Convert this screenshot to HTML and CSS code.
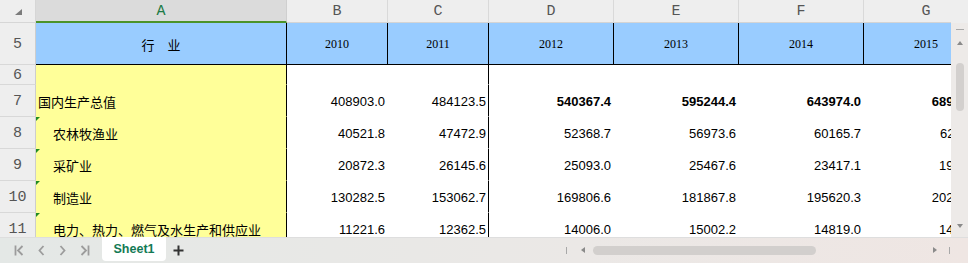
FILE: index.html
```html
<!DOCTYPE html>
<html>
<head>
<meta charset="UTF-8">
<link rel="stylesheet" href="styles.css">
<title>Sheet1</title>
</head>
<body>
  <div class="workbook">
    <div class="sheet-area">
      <div class="grid">
        <!-- column headers -->
        <div class="corner"><span class="corner-mark"></span></div>
        <div class="col-head selected">A</div>
        <div class="col-head">B</div>
        <div class="col-head">C</div>
        <div class="col-head">D</div>
        <div class="col-head">E</div>
        <div class="col-head">F</div>
        <div class="col-head">G</div>

        <!-- row 5 -->
        <div class="row-head">5</div>
        <div class="cell title-cell label-head">行　业</div>
        <div class="cell title-cell">2010</div>
        <div class="cell title-cell">2011</div>
        <div class="cell title-cell">2012</div>
        <div class="cell title-cell">2013</div>
        <div class="cell title-cell">2014</div>
        <div class="cell title-cell">2015</div>

        <!-- row 6 -->
        <div class="row-head">6</div>
        <div class="cell label"></div>
        <div class="cell num"></div>
        <div class="cell num edge"></div>
        <div class="cell num"></div>
        <div class="cell num"></div>
        <div class="cell num"></div>
        <div class="cell num"></div>

        <!-- row 7 -->
        <div class="row-head">7</div>
        <div class="cell label">国内生产总值</div>
        <div class="cell num">408903.0</div>
        <div class="cell num edge">484123.5</div>
        <div class="cell num bold">540367.4</div>
        <div class="cell num bold">595244.4</div>
        <div class="cell num bold">643974.0</div>
        <div class="cell num bold">689052.1</div>

        <!-- row 8 -->
        <div class="row-head">8</div>
        <div class="cell label sub"><span class="flag"></span>农林牧渔业</div>
        <div class="cell num">40521.8</div>
        <div class="cell num edge">47472.9</div>
        <div class="cell num">52368.7</div>
        <div class="cell num">56973.6</div>
        <div class="cell num">60165.7</div>
        <div class="cell num">62911.8</div>

        <!-- row 9 -->
        <div class="row-head">9</div>
        <div class="cell label sub"><span class="flag"></span>采矿业</div>
        <div class="cell num">20872.3</div>
        <div class="cell num edge">26145.6</div>
        <div class="cell num">25093.0</div>
        <div class="cell num">25467.6</div>
        <div class="cell num">23417.1</div>
        <div class="cell num">19013.6</div>

        <!-- row 10 -->
        <div class="row-head">10</div>
        <div class="cell label sub"><span class="flag"></span>制造业</div>
        <div class="cell num">130282.5</div>
        <div class="cell num edge">153062.7</div>
        <div class="cell num">169806.6</div>
        <div class="cell num">181867.8</div>
        <div class="cell num">195620.3</div>
        <div class="cell num">202420.1</div>

        <!-- row 11 -->
        <div class="row-head">11</div>
        <div class="cell label sub"><span class="flag"></span>电力、热力、燃气及水生产和供应业</div>
        <div class="cell num">11221.6</div>
        <div class="cell num edge">12362.5</div>
        <div class="cell num">14006.0</div>
        <div class="cell num">15002.2</div>
        <div class="cell num">14819.0</div>
        <div class="cell num">14218.6</div>
      </div>

      <div class="vscroll">
        <div class="vscroll-top"></div>
        <div class="vscroll-track">
          <span class="vscroll-split"></span>
          <span class="arrow up"></span>
          <span class="vthumb"></span>
          <span class="vspacer"></span>
          <span class="arrow down"></span>
        </div>
      </div>
    </div>

    <div class="tab-bar">
      <div class="tab-nav">
        <svg width="10" height="11" viewBox="0 0 10 11"><path d="M1.5 0.5v10M8.5 1L4 5.5L8.5 10" fill="none" stroke="#9c9c9c" stroke-width="1.8"/></svg>
        <svg width="7" height="11" viewBox="0 0 7 11"><path d="M5.5 1L1.5 5.5L5.5 10" fill="none" stroke="#9c9c9c" stroke-width="1.8"/></svg>
        <svg width="7" height="11" viewBox="0 0 7 11"><path d="M1.5 1L5.5 5.5L1.5 10" fill="none" stroke="#9c9c9c" stroke-width="1.8"/></svg>
        <svg width="10" height="11" viewBox="0 0 10 11"><path d="M1.5 1L6 5.5L1.5 10M8.5 0.5v10" fill="none" stroke="#9c9c9c" stroke-width="1.8"/></svg>
      </div>
      <div class="sheet-tab">Sheet1</div>
      <div class="add-tab">
        <svg width="11" height="11" viewBox="0 0 11 11"><path d="M5.5 0.5v10M0.5 5.5h10" stroke="#333" stroke-width="2"/></svg>
      </div>
      <div class="hscroll">
        <span class="hbar"></span>
        <span class="harrow left"></span>
        <span class="hthumb"></span>
        <span class="hspacer"></span>
        <span class="harrow right"></span>
        <span class="hbar"></span>
      </div>
    </div>
  </div>
</body>
</html>
```

FILE: styles.css
```css
body {
  margin: 0;
  background-color: #fff;
  font-family: 'Liberation Sans', Arial, sans-serif;
}
.workbook {
  width: 968px;
  height: 263px;
  display: flex;
  flex-direction: column;
  overflow: hidden;
}
.sheet-area {
  display: flex;
  height: 237px;
  overflow: hidden;
}

/* grid of cells */
.grid {
  width: 951px;
  flex: none;
  display: grid;
  grid-template-columns: 36px 251px 101px 101px 125px 125px 125px 125px;
  grid-template-rows: 23px 42px 20px 32px 32px 32px 32px 32px;
  overflow: hidden;
}
.grid > div {
  box-sizing: border-box;
  min-width: 0;
}
.corner {
  background-color: #eeeeee;
  border-right: 1px solid #d6d6d6;
  border-bottom: 1px solid #d6d6d6;
  position: relative;
}
.corner-mark {
  position: absolute;
  left: 15px;
  top: 9px;
  width: 0;
  height: 0;
  border-left: 7px solid transparent;
  border-bottom: 6px solid #7b7b7b;
}
.col-head {
  background-color: #eeeeee;
  border-right: 1px solid #d9d9d9;
  border-bottom: 1px solid #d4d4d4;
  color: #555;
  font-family: 'Liberation Mono', monospace;
  font-size: 15px;
  text-align: center;
  line-height: 22px;
  padding-top: 1px;
}
.col-head.selected {
  background-color: #dbdbdb;
  color: #1c7a45;
  border-bottom: 2px solid #4c9329;
  border-right-color: #cfcfcf;
}
.row-head {
  background-color: #eeeeee;
  border-right: 1px solid #cdcdcd;
  border-bottom: 1px solid #d8d8d8;
  color: #555;
  font-family: 'Liberation Mono', monospace;
  font-size: 15px;
  display: flex;
  align-items: center;
  justify-content: center;
  padding-top: 2px;
}

.cell {
  border-right: 1px solid #fff;
  border-bottom: 1px solid #fff;
  display: flex;
  align-items: center;
  white-space: nowrap;
  overflow: hidden;
  font-size: 13px;
  color: #000;
  padding-top: 2px;
}
.title-cell {
  background-color: #99ccff;
  border-right: 1px solid #000;
  border-bottom: 1px solid #000;
  justify-content: center;
  font-family: 'Liberation Serif', 'Times New Roman', serif;
  font-size: 12px;
  padding-top: 1px;
}
.label-head {
  font-family: 'Liberation Sans', 'Noto Sans CJK SC', sans-serif;
  font-size: 13px;
}
.label {
  background-color: #ffff99;
  border-right: 1px solid #000;
  border-bottom-color: #ffff99;
  padding-left: 2px;
  font-family: 'Liberation Sans', 'Noto Sans CJK SC', sans-serif;
  position: relative;
}
.label.sub {
  padding-left: 17px;
}
.flag {
  position: absolute;
  left: 0;
  top: 0;
  width: 0;
  height: 0;
  border-top: 4px solid #1f8a22;
  border-right: 4px solid transparent;
}
.num {
  justify-content: flex-end;
  padding-right: 2px;
}
.num.edge {
  border-right-color: #000;
}
.bold {
  font-weight: bold;
}

/* vertical scrollbar */
.vscroll {
  width: 17px;
  flex: none;
  display: flex;
  flex-direction: column;
}
.vscroll-top {
  height: 23px;
  background-color: #eeeeee;
}
.vscroll-track {
  flex: 1;
  background-color: #edeae8;
  display: flex;
  flex-direction: column;
  align-items: center;
  padding-top: 6px;
}
.vscroll-split {
  width: 8px;
  height: 1px;
  background-color: #a9a9a9;
}
.arrow {
  width: 0;
  height: 0;
  border-left: 3px solid transparent;
  border-right: 3px solid transparent;
}
.arrow.up {
  margin-top: 11px;
  border-bottom: 4px solid #8a8a8a;
}
.vthumb {
  margin-top: 18px;
  width: 8px;
  height: 48px;
  border-radius: 4px;
  background-color: #d3d0ce;
}
.vspacer {
  flex: 1;
}
.arrow.down {
  border-top: 4px solid #8a8a8a;
  margin-bottom: 9px;
}

/* bottom tab bar */
.tab-bar {
  height: 26px;
  display: flex;
  align-items: flex-start;
  background: linear-gradient(90deg, #e4e8e6, #ebe8e6 60%, #efe6e3);
  border-top: 1px solid #dedede;
  box-sizing: border-box;
}
.tab-nav {
  display: flex;
  align-items: center;
  gap: 14px;
  padding-left: 14px;
  height: 24px;
  width: 88px;
}
.sheet-tab {
  width: 64px;
  height: 24px;
  margin-top: -1px;
  background-color: #fff;
  border-radius: 0 0 4px 4px;
  color: #137a55;
  font-weight: bold;
  font-size: 12.5px;
  display: flex;
  align-items: center;
  justify-content: center;
}
.add-tab {
  display: flex;
  align-items: center;
  height: 24px;
  padding-left: 7px;
}
.hscroll {
  display: flex;
  align-items: center;
  height: 24px;
  margin-left: 382px;
  width: 384px;
}
.hbar {
  width: 1px;
  height: 7px;
  background-color: #a8a8a8;
}
.harrow {
  width: 0;
  height: 0;
  border-top: 3px solid transparent;
  border-bottom: 3px solid transparent;
}
.harrow.left {
  margin-left: 14px;
  border-right: 4px solid #8a8a8a;
}
.harrow.right {
  margin-right: 12px;
  border-left: 4px solid #8a8a8a;
}
.hthumb {
  margin-left: 8px;
  width: 223px;
  height: 9px;
  border-radius: 5px;
  background-color: #d2cfcd;
}
.hspacer {
  flex: 1;
}
```
